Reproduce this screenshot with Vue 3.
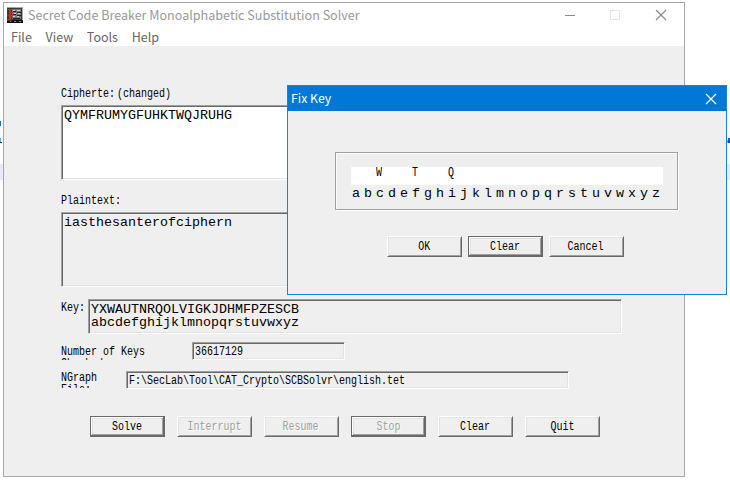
<script setup>
const menus = ['File', 'View', 'Tools', 'Help']
const actions = [
  { label: 'Solve', strong: true },
  { label: 'Interrupt', disabled: true },
  { label: 'Resume', disabled: true },
  { label: 'Stop', strong: true, disabled: true },
  { label: 'Clear' },
  { label: 'Quit' }
]
const dialogActions = [{ label: 'OK' }, { label: 'Clear', strong: true }, { label: 'Cancel' }]
const alphabet = 'abcdefghijklmnopqrstuvwxyz'.split('')
const fixed = { c: 'W', f: 'T', i: 'Q' }
</script>

<template>
  <div class="desktop">
    <div class="band"></div>
    <svg class="fragments" width="730" height="30" viewBox="0 0 730 30" shape-rendering="crispEdges">
      <path fill="#1762d1" d="M0 3h1v5H0zM728 20h2v5h-2z" />
      <path fill="#55aef5" d="M0 20h1v4H0zM727 22h1v3h-1z" />
      <path fill="#234" d="M0 24h2v1H0zM728 23h1v2h-1z" />
      <path fill="#b5692d" d="M3 5h1v2H3zM3 22h1v2H3z" />
    </svg>

    <section class="window main">
      <header class="titlebar">
        <svg class="app-icon" width="16" height="16" viewBox="0 0 16 16" shape-rendering="crispEdges">
          <path fill="#393939" d="M0 0h16v16H0z" />
          <path fill="#a8a8a8" d="M0 0h16v1H0zM15 1h1v12h-1z" />
          <path fill="#777" d="M5 2h9v10H5z" />
          <path fill="#cfcfcf" d="M6 3h2v1H6zM10 3h3v1h-3zM7 6h2v1H7zM11 6h2v1h-2zM6 9h2v1H6zM10 9h2v1h-2z" />
          <path fill="#222" d="M6 4h3v1H6zM10 5h4v1h-4zM6 7h3v1H6zM10 8h4v1h-4zM6 11h7v1H6z" />
          <path fill="#e0201c" d="M0 2h5v1H0zM2 3h2v10H2zM4 5h2v1H4zM0 8h6v1H0zM1 12h3v1H1zM4 10h2v1H4z" />
          <path fill="#111" d="M0 14h16v2H0zM5 13h10v1H5z" />
          <path fill="#888" d="M3 14h1v1H3zM7 14h2v1H7zM12 14h2v1h-2z" />
        </svg>
        <span class="title">Secret Code Breaker Monoalphabetic Substitution Solver</span>
        <svg class="controls" width="102" height="12" viewBox="0 0 102 12" fill="none">
          <path d="M0 6.5h10" stroke="#8c8c8c" />
          <path d="M45.5 1.5h9v9h-9z" stroke="#e4e4e4" />
          <path d="M91 1l10 10M101 1L91 11" stroke="#8c8c8c" stroke-width="1.1" />
        </svg>
      </header>
      <nav class="menubar">
        <span v-for="m in menus" :key="m" class="menu-item">{{ m }}</span>
      </nav>
      <div class="body">
        <div class="caption first"><span class="small">Cipherte:</span><span class="small changed">(changed)</span></div>
        <div class="sunken area white"><span class="big">QYMFRUMYGFUHKTWQJRUHG</span></div>
        <div class="caption second"><span class="small">Plaintext:</span></div>
        <div class="sunken area"><span class="big">iasthesanterofciphern</span></div>
        <div class="row key-row">
          <div class="label key-label"><span class="small">Key:</span></div>
          <div class="sunken key-box"><span class="big">YXWAUTNRQOLVIGKJDHMFPZESCB<br />abcdefghijklmnopqrstuvwxyz</span></div>
        </div>
        <div class="row count-row">
          <div class="label count-label"><span class="small">Number of Keys<br />Checked:</span></div>
          <div class="sunken count-box"><span class="small">36617129</span></div>
        </div>
        <div class="row file-row">
          <div class="label file-label"><span class="small">NGraph<br />File:</span></div>
          <div class="sunken file-box"><span class="small">F:\SecLab\Tool\CAT_Crypto\SCBSolvr\english.tet</span></div>
        </div>
        <div class="actions">
          <button v-for="a in actions" :key="a.label" class="btn" :class="{ strong: a.strong, disabled: a.disabled }">
            <span class="small">{{ a.label }}</span>
          </button>
        </div>
      </div>
    </section>

    <section class="window dialog">
      <header class="dialog-title">
        <span class="dialog-name">Fix Key</span>
        <svg width="12" height="12" viewBox="0 0 12 12" fill="none">
          <path d="M1 1l10 10M11 1L1 11" stroke="#fff" stroke-width="1.2" />
        </svg>
      </header>
      <div class="group">
        <div class="cells fixed-cells">
          <span v-for="c in alphabet" :key="c" class="cell"><span class="small">{{ fixed[c] }}</span></span>
        </div>
        <div class="cells letter-cells">
          <span v-for="c in alphabet" :key="c" class="cell">{{ c }}</span>
        </div>
      </div>
      <div class="dialog-actions">
        <button v-for="a in dialogActions" :key="a.label" class="btn" :class="{ strong: a.strong }">
          <span class="small">{{ a.label }}</span>
        </button>
      </div>
    </section>
  </div>
</template>

<style>
body {
  background: #fff;
  overflow: hidden;
}
</style>

<style scoped>
* {
  box-sizing: border-box;
}
.desktop {
  position: relative;
  width: 730px;
  height: 486px;
  overflow: hidden;
  background: #fff;
  color: #000;
  font-family: "Noto Sans", "Open Sans", sans-serif;
}
.band {
  position: absolute;
  left: 0;
  top: 164px;
  width: 730px;
  height: 16px;
  background: #e8e8ff;
}
.fragments {
  position: absolute;
  left: 0;
  top: 118px;
}
.window {
  position: absolute;
  background: #efefef;
}
.main {
  left: 3px;
  top: 2px;
  width: 682px;
  height: 475px;
  border: 1px solid #a8a8a8;
}
.titlebar {
  display: flex;
  align-items: center;
  height: 25px;
  padding: 0 17px 1px 3px;
  background: #fff;
  color: #999;
}
.title {
  flex: 1;
  margin-left: 5px;
  font-family: "Noto Sans CJK SC", "Noto Sans", sans-serif;
  font-size: 12.57px;
  line-height: 22px;
  white-space: nowrap;
}
.menubar {
  display: flex;
  gap: 13.7px;
  height: 18px;
  padding-left: 7px;
  background: #fff;
  color: #666;
  font-family: "Noto Sans CJK SC", "Noto Sans", sans-serif;
  font-size: 12.5px;
  line-height: 18px;
}
.body {
  padding: 41px 0 0 57px;
}
.small {
  display: inline-block;
  font-family: "Liberation Mono", monospace;
  font-size: 12px;
  line-height: 12px;
  white-space: pre;
  transform: scaleX(0.8333);
  transform-origin: 0 0;
}
.big {
  display: block;
  font-family: "Liberation Mono", monospace;
  font-size: 13.33px;
  line-height: 13px;
  white-space: pre;
}
.caption {
  display: flex;
  height: 18px;
  padding-top: 1px;
}
.changed {
  margin-left: -9px;
}
.second {
  height: 17px;
  margin-top: 15px;
  padding-top: 0;
}
.sunken {
  border: 1px solid;
  border-color: #a0a0a0 #fff #fff #a0a0a0;
  box-shadow: inset 1px 1px #696969, inset -1px -1px #e3e3e3;
  overflow: hidden;
}
.area {
  width: 562px;
  height: 75px;
  padding: 3px 2px;
}
.white {
  background: #fff;
}
.row {
  display: flex;
}
.label {
  overflow: hidden;
  flex: none;
}
.key-row {
  margin-top: 12px;
}
.key-label {
  width: 27px;
  padding-top: 3px;
}
.key-box {
  width: 534px;
  height: 35px;
  padding: 3px 2px;
}
.count-row {
  margin-top: 8px;
}
.count-label {
  width: 131px;
  height: 18px;
  padding-top: 4px;
}
.count-box {
  width: 153px;
  height: 18px;
  padding: 3px 2px 0;
}
.file-row {
  margin-top: 11px;
}
.file-label {
  width: 65px;
  height: 17px;
  padding-top: 1px;
}
.file-box {
  width: 443px;
  height: 18px;
  padding: 3px 2px 0;
}
.label .small,
.count-box .small,
.file-box .small {
  display: block;
}
.actions {
  display: flex;
  gap: 12px;
  margin: 27px 0 0 29px;
}
.btn {
  display: flex;
  align-items: center;
  justify-content: center;
  width: 75px;
  height: 21px;
  padding: 1px 1px 0 0;
  border: 1px solid;
  border-color: #fff #696969 #696969 #fff;
  border-radius: 0;
  background: #efefef;
  box-shadow: inset 1px 1px #e3e3e3, inset -1px -1px #a0a0a0;
  color: #000;
}
.btn .small {
  transform-origin: 50% 0;
}
.strong {
  border-color: #696969;
  box-shadow: inset -1px -1px #696969, inset 1px 1px #fff, inset -2px -2px #a0a0a0, inset 2px 2px #e3e3e3;
}
.disabled {
  color: #a0a0a0;
  text-shadow: 1px 1px #fff;
}
.dialog {
  left: 287px;
  top: 85px;
  width: 440px;
  height: 210px;
  border: 1px solid #1883d7;
}
.dialog-title {
  display: flex;
  align-items: center;
  justify-content: space-between;
  height: 25px;
  padding: 0 9px 0 3px;
  background: #0078d7;
  color: #fff;
  font-family: "Noto Sans CJK SC", "Noto Sans", sans-serif;
  font-size: 12.3px;
}
.dialog-name {
  line-height: 20px;
  padding-bottom: 2px;
}
.group {
  width: 343px;
  height: 58px;
  margin: 41px 0 0 47px;
  padding: 14px 15px 0;
  border: 1px solid #a0a0a0;
  box-shadow: inset 1px 1px #fff, 1px 1px #fff;
}
.cells {
  display: flex;
  width: 312px;
}
.fixed-cells {
  height: 18px;
  background: #fff;
}
.cell {
  width: 12px;
  text-align: center;
}
.fixed-cells .cell {
  padding-left: 1px;
  font-size: 12px;
  line-height: 12px;
  text-align: left;
}
.fixed-cells .small {
  display: block;
}
.letter-cells {
  padding-top: 1px;
  margin-left: -1px;
  font-family: "Liberation Mono", monospace;
  font-size: 13.33px;
  line-height: 16px;
}
.dialog-actions {
  display: flex;
  gap: 6px;
  margin: 26px 0 0 99px;
}
</style>
